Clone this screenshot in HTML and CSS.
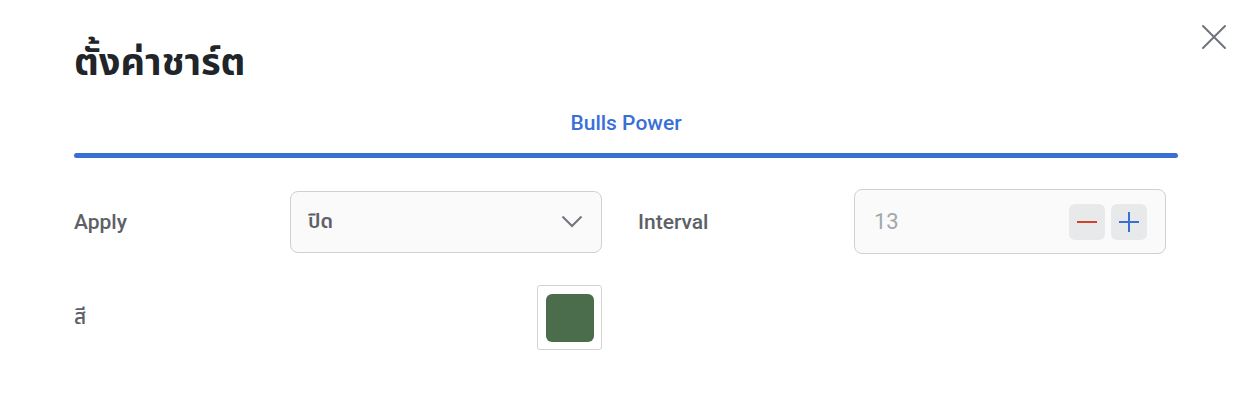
FILE: index.html
```html
<!DOCTYPE html>
<html lang="th">
<head>
<meta charset="utf-8">
<title>ตั้งค่าชาร์ต</title>
<link rel="stylesheet" href="styles.css">
</head>
<body>
<div class="dialog">
  <button class="close" aria-label="close">
    <svg width="26" height="26" viewBox="0 0 26 26"><path d="M2 2 L24 24 M24 2 L2 24" stroke="#6f747c" stroke-width="2" fill="none" stroke-linecap="round"/></svg>
  </button>
  <h1 class="title">ตั้งค่าชาร์ต</h1>
  <div class="tabs">
    <div class="tab">Bulls Power</div>
  </div>
  <div class="tab-bar"></div>
  <div class="grid">
    <div class="field">
      <div class="label">Apply</div>
      <div class="select">
        <span class="select-value">ปิด</span>
        <svg width="22" height="13" viewBox="0 0 22 13"><path d="M1.5 1.5 L11 11 L20.5 1.5" stroke="#70757d" stroke-width="2" fill="none"/></svg>
      </div>
    </div>
    <div class="field">
      <div class="label">Interval</div>
      <div class="number">
        <span class="number-value">13</span>
        <div class="steppers">
          <button class="step"><svg width="20" height="20" viewBox="0 0 20 20"><path d="M0 10 H20" stroke="#d0442a" stroke-width="2"/></svg></button>
          <button class="step"><svg width="20" height="20" viewBox="0 0 20 20"><path d="M0 10 H20 M10 0 V20" stroke="#3b6fd6" stroke-width="2"/></svg></button>
        </div>
      </div>
    </div>
    <div class="field">
      <div class="label">สี</div>
      <div class="swatch-cell">
        <div class="swatch"><div class="swatch-color"></div></div>
      </div>
    </div>
  </div>
</div>
</body>
</html>
```
FILE: styles.css
```css
* { box-sizing: border-box; }
html, body { margin: 0; padding: 0; background: #fff; }
body {
  font-family: Roboto, "Noto Sans", "Noto Sans Thai", "Noto Sans CJK SC", sans-serif;
  color: #5f6369;
}
.dialog {
  position: relative;
  width: 1250px;
  height: 406px;
  padding: 38px 72px 0 74px;
}
.close {
  position: absolute;
  top: 24px;
  left: 1201px;
  width: 26px;
  height: 26px;
  padding: 0;
  border: 0;
  background: none;
}
.close svg { display: block; }
.title {
  margin: 0;
  font-size: 38px;
  line-height: 48px;
  font-weight: 700;
  color: #212429;
}
.tabs {
  display: flex;
  justify-content: center;
  height: 67px;
  align-items: center;
  padding-top: 6px;
}
.tab {
  font-size: 21px;
  font-weight: 500;
  color: #3a6fd9;
}
.tab-bar {
  height: 5px;
  border-radius: 3px;
  background: #3a6fd6;
}
.grid {
  display: grid;
  grid-template-columns: 540px 540px;
  column-gap: 24px;
  row-gap: 31px;
  margin-top: 31px;
}
.field {
  display: flex;
  align-items: center;
  height: 65px;
}
.label {
  width: 216px;
  font-size: 21px;
  font-weight: 500;
  color: #5d6167;
}
.select {
  width: 312px;
  height: 62px;
  border: 1px solid #cfd0d2;
  border-radius: 8px;
  background: #fafafa;
  display: flex;
  align-items: center;
  justify-content: space-between;
  padding: 0 18px 0 17px;
}
.select-value {
  font-size: 20px;
  font-weight: 600;
  color: #5d6167;
}
.number {
  width: 312px;
  height: 65px;
  border: 1px solid #cfd0d2;
  border-radius: 8px;
  background: #fafafa;
  display: flex;
  align-items: center;
  justify-content: space-between;
  padding: 0 18px 0 19px;
}
.number-value {
  font-size: 22px;
  color: #a2a6ad;
}
.steppers {
  display: flex;
  gap: 6px;
}
.step {
  width: 36px;
  height: 36px;
  border: 0;
  border-radius: 6px;
  background: #e8e9eb;
  display: flex;
  align-items: center;
  justify-content: center;
  padding: 0;
}
.step svg { display: block; }
.swatch-cell {
  width: 312px;
  display: flex;
  justify-content: flex-end;
}
.swatch {
  width: 65px;
  height: 65px;
  border: 1px solid #d3d3d3;
  border-radius: 3px;
  background: #fff;
  display: flex;
  align-items: center;
  justify-content: center;
}
.swatch-color {
  width: 48px;
  height: 48px;
  border-radius: 6px;
  background: #4b6d4c;
}
```
